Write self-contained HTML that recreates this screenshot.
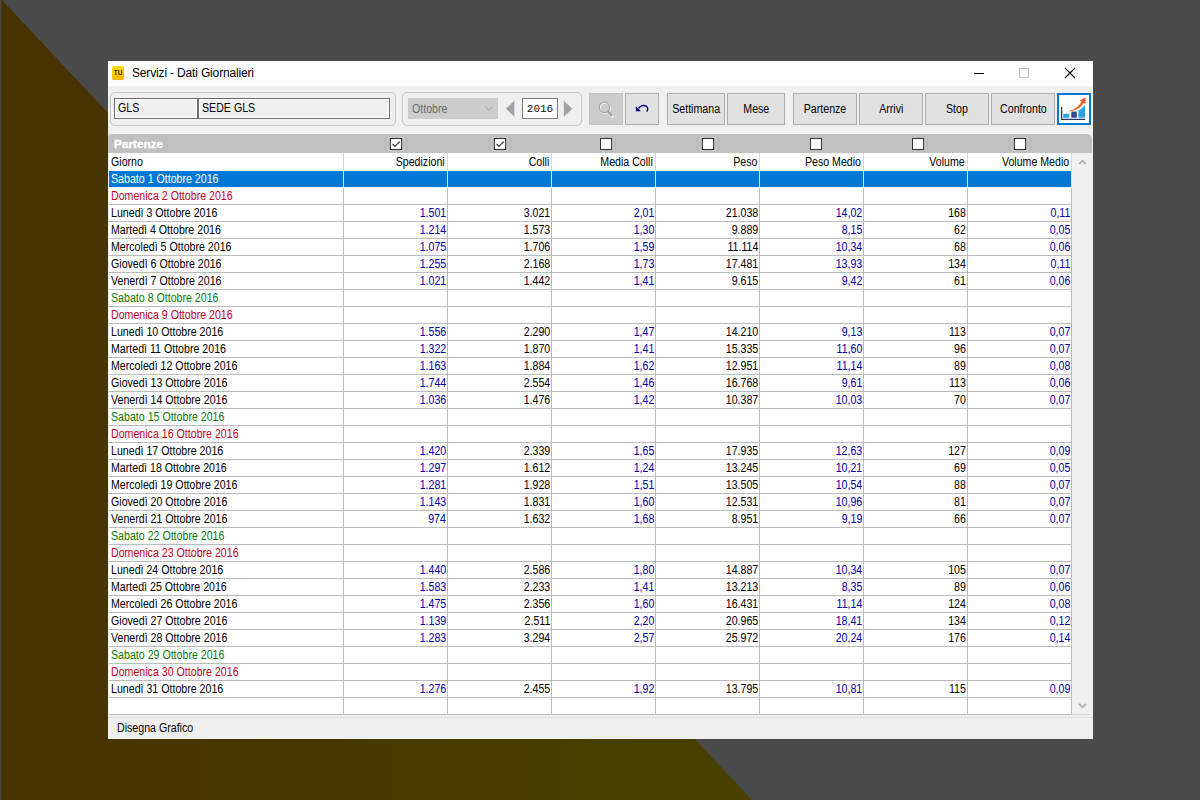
<!DOCTYPE html>
<html lang="it">
<head>
<meta charset="utf-8">
<title>Servizi - Dati Giornalieri</title>
<style>
html,body{margin:0;padding:0}
body{width:1200px;height:800px;overflow:hidden;background:#4a4a4a;position:relative;font-family:"Liberation Sans",sans-serif;font-size:12.5px;color:#000}
#bg{position:absolute;left:0;top:0}
#w{position:absolute;left:108px;top:61px;width:985px;height:678px;background:#f0f0f0;overflow:hidden}
#tb{position:absolute;left:0;top:0;width:985px;height:25px;background:#fff}
#ico{position:absolute;left:4px;top:5px;width:12px;height:14px;border-radius:2px;background:linear-gradient(160deg,#ffe02a 0%,#fdd000 45%,#e9a90a 100%);font-weight:bold;font-size:6.5px;line-height:14px;text-align:center;color:#3a2a00;letter-spacing:-.2px}
#ttl{position:absolute;left:24px;top:4px;font-size:12px;line-height:16px;white-space:nowrap;color:#000;letter-spacing:-.16px}
.n{display:inline-block;transform:scaleX(.85);transform-origin:0 50%;white-space:nowrap}
.gb{position:absolute;top:31px;height:32px;border:1px solid #c6c6c6;border-radius:5px}
.fld{position:absolute;top:37px;height:18px;border:1px solid #6f6f6f;box-shadow:inset 0 0 0 1px #fff;background:#f0f0f0;line-height:16px;padding:1px 0 0 3px}
.btn{position:absolute;top:32px;height:30px;border:1px solid #adadad;background:#e1e1e1;text-align:center;line-height:31px}
.btn .n{transform-origin:50% 50%}
#sec{position:absolute;left:0;top:73px;width:984px;height:19px;background:#c0c0c0;border-radius:3px 5px 0 0}
#sec b{position:absolute;left:6px;top:3px;font-size:11.8px;line-height:15px;color:#fff;-webkit-text-stroke:.3px #fff}
.cb{position:absolute;top:4px;width:10px;height:10px;border:1px solid #333;background:#fff}
#g{position:absolute;left:1px;top:92px;width:963px;height:562px;background:#fff;overflow:hidden}
.r{position:absolute;left:0;width:963px;height:16px;border-bottom:1px solid #bababa;line-height:16px}
.r.hd{top:0;height:17px;border-bottom-color:#fff;line-height:18px}
.r.hd .c{border-right-color:#d6d6d6}
.r.hd .c .n{margin-right:2px}
.r.hd .c0 .n{margin:0 0 0 2px}
.c{position:absolute;top:0;height:100%;width:103px;border-right:1px solid #bababa;text-align:right}
.c .n{transform-origin:100% 50%;margin-right:1px}
.c0{left:0;width:234px;text-align:left}
.c0 .n{transform-origin:0 50%;margin:0 0 0 2px}
.c1{left:235px}.c2{left:339px}.c3{left:443px}.c4{left:547px}.c5{left:651px}.c6{left:755px}.c7{left:859px}
.s{color:#0b780b}.d{color:#c40018}.bl{color:#0000a6}
.sel{background:#0078d7;border-bottom-color:#e6f2fb}
.sel .c{border-right-color:#cfe6f8}
.sel .c0{color:#fff}
#sb{position:absolute;left:964px;top:92px;width:19px;height:561px;background:#f0f0f0;border-bottom:1px solid #d6d6d6}
#st{position:absolute;left:0;top:654px;width:985px;height:25px;background:#f0f0f0}
#st .n{position:absolute;left:8.5px;top:5px;line-height:16px}
</style>
</head>
<body>
<svg id="bg" width="1200" height="800" viewBox="0 0 1200 800">
<defs><linearGradient id="ol" gradientUnits="userSpaceOnUse" x1="0" y1="0" x2="752" y2="0"><stop offset="0" stop-color="#483200"/><stop offset="1" stop-color="#484100"/></linearGradient></defs>
<polygon points="1.2,0 2,0 752,800 1.2,800" fill="url(#ol)"/>
</svg>
<div id="w">
 <div id="tb">
  <div id="ico">TU</div>
  <div id="ttl">Servizi - Dati Giornalieri</div>
  <svg style="position:absolute;left:860px;top:0" width="125" height="25" viewBox="0 0 125 25">
   <path d="M6 12.5H16" stroke="#000" stroke-width="1" fill="none"/>
   <rect x="51.5" y="7.5" width="9" height="9" stroke="#c4c4c4" stroke-width="1" fill="none"/>
   <path d="M97 7L107 17M107 7L97 17" stroke="#000" stroke-width="1.1" fill="none"/>
  </svg>
 </div>

 <div class="gb" style="left:2px;width:284px"></div>
 <div class="fld" style="left:6px;width:79px"><span class="n">GLS</span></div>
 <div class="fld" style="left:90px;width:187px"><span class="n">SEDE GLS</span></div>

 <div class="gb" style="left:294px;width:178px"></div>
 <div style="position:absolute;left:300px;top:37px;width:90px;height:21px;background:#cccccc;color:#6d6d6d;line-height:23px"><span class="n" style="margin-left:4px">Ottobre</span>
  <svg style="position:absolute;left:76px;top:7px" width="10" height="7" viewBox="0 0 10 7"><path d="M1 1.2L5 5.2L9 1.2" stroke="#b4b4b4" stroke-width="1.3" fill="none"/></svg>
 </div>
 <svg style="position:absolute;left:397px;top:39px" width="70" height="18" viewBox="0 0 70 18"><path d="M9.3 0.8V16.8L0.8 8.8Z" fill="#a2a2a2"/><path d="M58.8 0.8V16.8L67.3 8.8Z" fill="#a2a2a2"/></svg>
 <div style="position:absolute;left:414px;top:37px;width:34px;height:19px;border:1px solid #7a7a7a;background:#fff;font-family:'Liberation Mono',monospace;font-size:11px;line-height:20px;text-align:center;color:#111">2016</div>

 <div class="btn" style="left:481px;width:32px;background:#cccccc;border-color:#c3c3c3">
  <svg style="position:absolute;left:0;top:0" width="32" height="29" viewBox="0 0 32 29">
   <circle cx="15" cy="14" r="5.2" stroke="#fff" stroke-width="1.3" fill="none"/>
   <path d="M19 18.8L22.6 22.6" stroke="#fff" stroke-width="2.6" stroke-linecap="round"/>
   <circle cx="14.4" cy="13.4" r="5.2" stroke="#a4a4a4" stroke-width="1.2" fill="none"/>
   <path d="M18.1 17.6L21.6 21.4" stroke="#a4a4a4" stroke-width="2.3" stroke-linecap="round"/>
  </svg>
 </div>
 <div class="btn" style="left:517px;width:32px">
  <svg style="position:absolute;left:0;top:0" width="32" height="29" viewBox="0 0 32 29">
   <path d="M9.8 12.2V17.2H15Z" fill="#00007c"/>
   <path d="M12.6 14.4C14.5 11.6 18.2 10.6 20.4 12.3C22.3 13.8 22 16.2 20.6 17.6" stroke="#00007c" stroke-width="1.4" fill="none"/>
  </svg>
 </div>
 <div class="btn" style="left:559px;width:56px"><span class="n">Settimana</span></div>
 <div class="btn" style="left:619px;width:56px"><span class="n">Mese</span></div>
 <div class="btn" style="left:685px;width:62px"><span class="n">Partenze</span></div>
 <div class="btn" style="left:751px;width:62px"><span class="n">Arrivi</span></div>
 <div class="btn" style="left:817px;width:62px"><span class="n">Stop</span></div>
 <div class="btn" style="left:883px;width:62px"><span class="n">Confronto</span></div>
 <div class="btn" style="left:949px;width:30px;height:28px;border:2px solid #0078d7;background:#fff">
  <svg style="position:absolute;left:0;top:0" width="30" height="27" viewBox="0 0 30 27">
   <path d="M2.6 12V24.3H26" stroke="#1f3a68" stroke-width="1.3" fill="none"/>
   <rect x="4.2" y="18.7" width="6" height="4" fill="#2f9ede"/>
   <rect x="12.3" y="16.6" width="5.5" height="6.1" fill="#2a4b8c"/>
   <path d="M19.4 15.6C22 14.4 24.2 12.4 26 9.8V22.7H19.4Z" fill="#2f9ede"/>
   <path d="M8.3 16.4C15 15.4 19.6 12 22.6 6.6L20.6 5.4L26.4 2.4L26.6 9L24.6 7.8C21.6 13.4 15.6 16.6 8.3 16.4Z" fill="#f05a24"/>
  </svg>
 </div>

 <div id="sec"><b>Partenze</b>
  <div class="cb" style="left:282px"><svg width="10" height="10" viewBox="0 0 10 10" style="position:absolute;left:0;top:0"><path d="M1.6 5L4 7.4L8.6 2.6" stroke="#333" stroke-width="1.2" fill="none"/></svg></div>
  <div class="cb" style="left:386px"><svg width="10" height="10" viewBox="0 0 10 10" style="position:absolute;left:0;top:0"><path d="M1.6 5L4 7.4L8.6 2.6" stroke="#333" stroke-width="1.2" fill="none"/></svg></div>
  <div class="cb" style="left:492px"></div>
  <div class="cb" style="left:594px"></div>
  <div class="cb" style="left:702px"></div>
  <div class="cb" style="left:804px"></div>
  <div class="cb" style="left:906px"></div>
 </div>

 <div id="g">
<div class="r hd"><span class="c c0"><span class="n">Giorno</span></span><span class="c c1"><span class="n">Spedizioni</span></span><span class="c c2"><span class="n">Colli</span></span><span class="c c3"><span class="n">Media Colli</span></span><span class="c c4"><span class="n">Peso</span></span><span class="c c5"><span class="n">Peso Medio</span></span><span class="c c6"><span class="n">Volume</span></span><span class="c c7"><span class="n">Volume Medio</span></span></div>
<div class="r sel" style="top:18px"><span class="c c0 s"><span class="n">Sabato 1 Ottobre 2016</span></span><span class="c c1"></span><span class="c c2"></span><span class="c c3"></span><span class="c c4"></span><span class="c c5"></span><span class="c c6"></span><span class="c c7"></span></div>
<div class="r" style="top:35px"><span class="c c0 d"><span class="n">Domenica 2 Ottobre 2016</span></span><span class="c c1"></span><span class="c c2"></span><span class="c c3"></span><span class="c c4"></span><span class="c c5"></span><span class="c c6"></span><span class="c c7"></span></div>
<div class="r" style="top:52px"><span class="c c0 "><span class="n">Lunedì 3 Ottobre 2016</span></span><span class="c c1 bl"><span class="n">1.501</span></span><span class="c c2 "><span class="n">3.021</span></span><span class="c c3 bl"><span class="n">2,01</span></span><span class="c c4 "><span class="n">21.038</span></span><span class="c c5 bl"><span class="n">14,02</span></span><span class="c c6 "><span class="n">168</span></span><span class="c c7 bl"><span class="n">0,11</span></span></div>
<div class="r" style="top:69px"><span class="c c0 "><span class="n">Martedì 4 Ottobre 2016</span></span><span class="c c1 bl"><span class="n">1.214</span></span><span class="c c2 "><span class="n">1.573</span></span><span class="c c3 bl"><span class="n">1,30</span></span><span class="c c4 "><span class="n">9.889</span></span><span class="c c5 bl"><span class="n">8,15</span></span><span class="c c6 "><span class="n">62</span></span><span class="c c7 bl"><span class="n">0,05</span></span></div>
<div class="r" style="top:86px"><span class="c c0 "><span class="n">Mercoledì 5 Ottobre 2016</span></span><span class="c c1 bl"><span class="n">1.075</span></span><span class="c c2 "><span class="n">1.706</span></span><span class="c c3 bl"><span class="n">1,59</span></span><span class="c c4 "><span class="n">11.114</span></span><span class="c c5 bl"><span class="n">10,34</span></span><span class="c c6 "><span class="n">68</span></span><span class="c c7 bl"><span class="n">0,06</span></span></div>
<div class="r" style="top:103px"><span class="c c0 "><span class="n">Giovedì 6 Ottobre 2016</span></span><span class="c c1 bl"><span class="n">1.255</span></span><span class="c c2 "><span class="n">2.168</span></span><span class="c c3 bl"><span class="n">1,73</span></span><span class="c c4 "><span class="n">17.481</span></span><span class="c c5 bl"><span class="n">13,93</span></span><span class="c c6 "><span class="n">134</span></span><span class="c c7 bl"><span class="n">0,11</span></span></div>
<div class="r" style="top:120px"><span class="c c0 "><span class="n">Venerdì 7 Ottobre 2016</span></span><span class="c c1 bl"><span class="n">1.021</span></span><span class="c c2 "><span class="n">1.442</span></span><span class="c c3 bl"><span class="n">1,41</span></span><span class="c c4 "><span class="n">9.615</span></span><span class="c c5 bl"><span class="n">9,42</span></span><span class="c c6 "><span class="n">61</span></span><span class="c c7 bl"><span class="n">0,06</span></span></div>
<div class="r" style="top:137px"><span class="c c0 s"><span class="n">Sabato 8 Ottobre 2016</span></span><span class="c c1"></span><span class="c c2"></span><span class="c c3"></span><span class="c c4"></span><span class="c c5"></span><span class="c c6"></span><span class="c c7"></span></div>
<div class="r" style="top:154px"><span class="c c0 d"><span class="n">Domenica 9 Ottobre 2016</span></span><span class="c c1"></span><span class="c c2"></span><span class="c c3"></span><span class="c c4"></span><span class="c c5"></span><span class="c c6"></span><span class="c c7"></span></div>
<div class="r" style="top:171px"><span class="c c0 "><span class="n">Lunedì 10 Ottobre 2016</span></span><span class="c c1 bl"><span class="n">1.556</span></span><span class="c c2 "><span class="n">2.290</span></span><span class="c c3 bl"><span class="n">1,47</span></span><span class="c c4 "><span class="n">14.210</span></span><span class="c c5 bl"><span class="n">9,13</span></span><span class="c c6 "><span class="n">113</span></span><span class="c c7 bl"><span class="n">0,07</span></span></div>
<div class="r" style="top:188px"><span class="c c0 "><span class="n">Martedì 11 Ottobre 2016</span></span><span class="c c1 bl"><span class="n">1.322</span></span><span class="c c2 "><span class="n">1.870</span></span><span class="c c3 bl"><span class="n">1,41</span></span><span class="c c4 "><span class="n">15.335</span></span><span class="c c5 bl"><span class="n">11,60</span></span><span class="c c6 "><span class="n">96</span></span><span class="c c7 bl"><span class="n">0,07</span></span></div>
<div class="r" style="top:205px"><span class="c c0 "><span class="n">Mercoledì 12 Ottobre 2016</span></span><span class="c c1 bl"><span class="n">1.163</span></span><span class="c c2 "><span class="n">1.884</span></span><span class="c c3 bl"><span class="n">1,62</span></span><span class="c c4 "><span class="n">12.951</span></span><span class="c c5 bl"><span class="n">11,14</span></span><span class="c c6 "><span class="n">89</span></span><span class="c c7 bl"><span class="n">0,08</span></span></div>
<div class="r" style="top:222px"><span class="c c0 "><span class="n">Giovedì 13 Ottobre 2016</span></span><span class="c c1 bl"><span class="n">1.744</span></span><span class="c c2 "><span class="n">2.554</span></span><span class="c c3 bl"><span class="n">1,46</span></span><span class="c c4 "><span class="n">16.768</span></span><span class="c c5 bl"><span class="n">9,61</span></span><span class="c c6 "><span class="n">113</span></span><span class="c c7 bl"><span class="n">0,06</span></span></div>
<div class="r" style="top:239px"><span class="c c0 "><span class="n">Venerdì 14 Ottobre 2016</span></span><span class="c c1 bl"><span class="n">1.036</span></span><span class="c c2 "><span class="n">1.476</span></span><span class="c c3 bl"><span class="n">1,42</span></span><span class="c c4 "><span class="n">10.387</span></span><span class="c c5 bl"><span class="n">10,03</span></span><span class="c c6 "><span class="n">70</span></span><span class="c c7 bl"><span class="n">0,07</span></span></div>
<div class="r" style="top:256px"><span class="c c0 s"><span class="n">Sabato 15 Ottobre 2016</span></span><span class="c c1"></span><span class="c c2"></span><span class="c c3"></span><span class="c c4"></span><span class="c c5"></span><span class="c c6"></span><span class="c c7"></span></div>
<div class="r" style="top:273px"><span class="c c0 d"><span class="n">Domenica 16 Ottobre 2016</span></span><span class="c c1"></span><span class="c c2"></span><span class="c c3"></span><span class="c c4"></span><span class="c c5"></span><span class="c c6"></span><span class="c c7"></span></div>
<div class="r" style="top:290px"><span class="c c0 "><span class="n">Lunedì 17 Ottobre 2016</span></span><span class="c c1 bl"><span class="n">1.420</span></span><span class="c c2 "><span class="n">2.339</span></span><span class="c c3 bl"><span class="n">1,65</span></span><span class="c c4 "><span class="n">17.935</span></span><span class="c c5 bl"><span class="n">12,63</span></span><span class="c c6 "><span class="n">127</span></span><span class="c c7 bl"><span class="n">0,09</span></span></div>
<div class="r" style="top:307px"><span class="c c0 "><span class="n">Martedì 18 Ottobre 2016</span></span><span class="c c1 bl"><span class="n">1.297</span></span><span class="c c2 "><span class="n">1.612</span></span><span class="c c3 bl"><span class="n">1,24</span></span><span class="c c4 "><span class="n">13.245</span></span><span class="c c5 bl"><span class="n">10,21</span></span><span class="c c6 "><span class="n">69</span></span><span class="c c7 bl"><span class="n">0,05</span></span></div>
<div class="r" style="top:324px"><span class="c c0 "><span class="n">Mercoledì 19 Ottobre 2016</span></span><span class="c c1 bl"><span class="n">1.281</span></span><span class="c c2 "><span class="n">1.928</span></span><span class="c c3 bl"><span class="n">1,51</span></span><span class="c c4 "><span class="n">13.505</span></span><span class="c c5 bl"><span class="n">10,54</span></span><span class="c c6 "><span class="n">88</span></span><span class="c c7 bl"><span class="n">0,07</span></span></div>
<div class="r" style="top:341px"><span class="c c0 "><span class="n">Giovedì 20 Ottobre 2016</span></span><span class="c c1 bl"><span class="n">1.143</span></span><span class="c c2 "><span class="n">1.831</span></span><span class="c c3 bl"><span class="n">1,60</span></span><span class="c c4 "><span class="n">12.531</span></span><span class="c c5 bl"><span class="n">10,96</span></span><span class="c c6 "><span class="n">81</span></span><span class="c c7 bl"><span class="n">0,07</span></span></div>
<div class="r" style="top:358px"><span class="c c0 "><span class="n">Venerdì 21 Ottobre 2016</span></span><span class="c c1 bl"><span class="n">974</span></span><span class="c c2 "><span class="n">1.632</span></span><span class="c c3 bl"><span class="n">1,68</span></span><span class="c c4 "><span class="n">8.951</span></span><span class="c c5 bl"><span class="n">9,19</span></span><span class="c c6 "><span class="n">66</span></span><span class="c c7 bl"><span class="n">0,07</span></span></div>
<div class="r" style="top:375px"><span class="c c0 s"><span class="n">Sabato 22 Ottobre 2016</span></span><span class="c c1"></span><span class="c c2"></span><span class="c c3"></span><span class="c c4"></span><span class="c c5"></span><span class="c c6"></span><span class="c c7"></span></div>
<div class="r" style="top:392px"><span class="c c0 d"><span class="n">Domenica 23 Ottobre 2016</span></span><span class="c c1"></span><span class="c c2"></span><span class="c c3"></span><span class="c c4"></span><span class="c c5"></span><span class="c c6"></span><span class="c c7"></span></div>
<div class="r" style="top:409px"><span class="c c0 "><span class="n">Lunedì 24 Ottobre 2016</span></span><span class="c c1 bl"><span class="n">1.440</span></span><span class="c c2 "><span class="n">2.586</span></span><span class="c c3 bl"><span class="n">1,80</span></span><span class="c c4 "><span class="n">14.887</span></span><span class="c c5 bl"><span class="n">10,34</span></span><span class="c c6 "><span class="n">105</span></span><span class="c c7 bl"><span class="n">0,07</span></span></div>
<div class="r" style="top:426px"><span class="c c0 "><span class="n">Martedì 25 Ottobre 2016</span></span><span class="c c1 bl"><span class="n">1.583</span></span><span class="c c2 "><span class="n">2.233</span></span><span class="c c3 bl"><span class="n">1,41</span></span><span class="c c4 "><span class="n">13.213</span></span><span class="c c5 bl"><span class="n">8,35</span></span><span class="c c6 "><span class="n">89</span></span><span class="c c7 bl"><span class="n">0,06</span></span></div>
<div class="r" style="top:443px"><span class="c c0 "><span class="n">Mercoledì 26 Ottobre 2016</span></span><span class="c c1 bl"><span class="n">1.475</span></span><span class="c c2 "><span class="n">2.356</span></span><span class="c c3 bl"><span class="n">1,60</span></span><span class="c c4 "><span class="n">16.431</span></span><span class="c c5 bl"><span class="n">11,14</span></span><span class="c c6 "><span class="n">124</span></span><span class="c c7 bl"><span class="n">0,08</span></span></div>
<div class="r" style="top:460px"><span class="c c0 "><span class="n">Giovedì 27 Ottobre 2016</span></span><span class="c c1 bl"><span class="n">1.139</span></span><span class="c c2 "><span class="n">2.511</span></span><span class="c c3 bl"><span class="n">2,20</span></span><span class="c c4 "><span class="n">20.965</span></span><span class="c c5 bl"><span class="n">18,41</span></span><span class="c c6 "><span class="n">134</span></span><span class="c c7 bl"><span class="n">0,12</span></span></div>
<div class="r" style="top:477px"><span class="c c0 "><span class="n">Venerdì 28 Ottobre 2016</span></span><span class="c c1 bl"><span class="n">1.283</span></span><span class="c c2 "><span class="n">3.294</span></span><span class="c c3 bl"><span class="n">2,57</span></span><span class="c c4 "><span class="n">25.972</span></span><span class="c c5 bl"><span class="n">20,24</span></span><span class="c c6 "><span class="n">176</span></span><span class="c c7 bl"><span class="n">0,14</span></span></div>
<div class="r" style="top:494px"><span class="c c0 s"><span class="n">Sabato 29 Ottobre 2016</span></span><span class="c c1"></span><span class="c c2"></span><span class="c c3"></span><span class="c c4"></span><span class="c c5"></span><span class="c c6"></span><span class="c c7"></span></div>
<div class="r" style="top:511px"><span class="c c0 d"><span class="n">Domenica 30 Ottobre 2016</span></span><span class="c c1"></span><span class="c c2"></span><span class="c c3"></span><span class="c c4"></span><span class="c c5"></span><span class="c c6"></span><span class="c c7"></span></div>
<div class="r" style="top:528px"><span class="c c0 "><span class="n">Lunedì 31 Ottobre 2016</span></span><span class="c c1 bl"><span class="n">1.276</span></span><span class="c c2 "><span class="n">2.455</span></span><span class="c c3 bl"><span class="n">1,92</span></span><span class="c c4 "><span class="n">13.795</span></span><span class="c c5 bl"><span class="n">10,81</span></span><span class="c c6 "><span class="n">115</span></span><span class="c c7 bl"><span class="n">0,09</span></span></div>
<div class="r" style="top:545px"><span class="c c0"></span><span class="c c1"></span><span class="c c2"></span><span class="c c3"></span><span class="c c4"></span><span class="c c5"></span><span class="c c6"></span><span class="c c7"></span></div>
 </div>
 <div id="sb">
  <svg style="position:absolute;left:6px;top:6px" width="9" height="6" viewBox="0 0 9 6"><path d="M1 5.2L4.5 1.7L8 5.2" stroke="#b0b0b0" stroke-width="1.8" fill="none"/></svg>
  <svg style="position:absolute;left:6px;top:550px" width="9" height="6" viewBox="0 0 9 6"><path d="M1 0.8L4.5 4.3L8 0.8" stroke="#b0b0b0" stroke-width="1.8" fill="none"/></svg>
 </div>
 <div id="st"><div style="position:absolute;left:0;top:2px;width:985px;height:1px;background:#dcdcdc"></div><span class="n">Disegna Grafico</span></div>
</div>
</body>
</html>
